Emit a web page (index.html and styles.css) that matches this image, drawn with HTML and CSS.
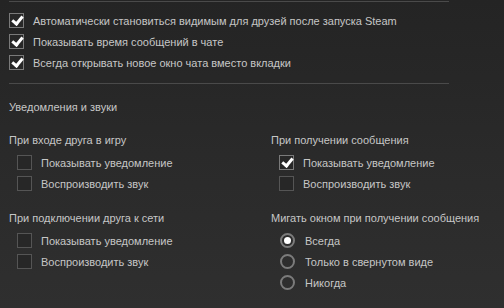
FILE: index.html
```html
<!DOCTYPE html>
<html lang="ru">
<head>
  <meta charset="UTF-8" />
  <title>Настройки друзей</title>
  <link rel="stylesheet" href="styles.css">
</head>
<body>
  <div class="panel">
    <div class="sep"></div>

    <div class="general">
      <label class="opt"><span class="box checked"></span>Автоматически становиться видимым для друзей после запуска Steam</label>
      <label class="opt"><span class="box checked"></span>Показывать время сообщений в чате</label>
      <label class="opt"><span class="box checked"></span>Всегда открывать новое окно чата вместо вкладки</label>
    </div>

    <div class="sep"></div>

    <div class="section-title">Уведомления и звуки</div>

    <div class="groups">
      <div class="group">
        <div class="group-title">При входе друга в игру</div>
        <div class="opts">
          <label class="opt"><span class="box"></span>Показывать уведомление</label>
          <label class="opt"><span class="box"></span>Воспроизводить звук</label>
        </div>
      </div>

      <div class="group">
        <div class="group-title">При получении сообщения</div>
        <div class="opts">
          <label class="opt"><span class="box checked"></span>Показывать уведомление</label>
          <label class="opt"><span class="box"></span>Воспроизводить звук</label>
        </div>
      </div>

      <div class="group">
        <div class="group-title">При подключении друга к сети</div>
        <div class="opts">
          <label class="opt"><span class="box"></span>Показывать уведомление</label>
          <label class="opt"><span class="box"></span>Воспроизводить звук</label>
        </div>
      </div>

      <div class="group">
        <div class="group-title">Мигать окном при получении сообщения</div>
        <div class="opts">
          <label class="opt"><span class="radio on"></span>Всегда</label>
          <label class="opt"><span class="radio"></span>Только в свернутом виде</label>
          <label class="opt"><span class="radio"></span>Никогда</label>
        </div>
      </div>
    </div>
  </div>
</body>
</html>
```

FILE: styles.css
```css
html, body {
  height: 100%;
}
body {
  margin: 0;
  background: linear-gradient(to bottom, #242424 0%, #2a2a2a 50%, #2f2f2f 100%);
  font-family: Arial, "Liberation Sans", sans-serif;
  font-size: 11px;
  color: #c6c6c6;
  overflow: hidden;
}
.panel {
  width: 440px;
  padding: 1px 0 0 9px;
}
.sep {
  height: 1px;
  background: #4a4a4a;
}
.general {
  padding: 8px 0 10px;
}
.opt {
  display: flex;
  align-items: center;
  height: 21px;
  gap: 9px;
  white-space: nowrap;
}
.box {
  width: 13px;
  height: 13px;
  border: 1px solid #555;
  background: #272727;
  flex-shrink: 0;
  position: relative;
}
.box.checked {
  border-color: #7a7a7a;
}
.box.checked::after {
  content: "";
  position: absolute;
  left: 4px;
  top: 0px;
  width: 4px;
  height: 8px;
  border: solid #fff;
  border-width: 0 3px 3px 0;
  transform: rotate(40deg);
}
.radio {
  width: 11px;
  height: 11px;
  border: 2px solid #7b7b7b;
  border-radius: 50%;
  flex-shrink: 0;
  margin-left: 1px;
  margin-right: 1px;
  position: relative;
}
.radio.on::after {
  content: "";
  position: absolute;
  left: 2px;
  top: 2px;
  width: 7px;
  height: 7px;
  border-radius: 50%;
  background: #fff;
}
.section-title {
  margin-top: 13px;
  line-height: 20px;
}
.groups {
  display: grid;
  grid-template-columns: 262px 1fr;
  row-gap: 14px;
  margin-top: 13px;
}
.group-title {
  line-height: 20px;
  margin-bottom: 2px;
  white-space: nowrap;
}
.opts {
  padding-left: 8px;
}
```
